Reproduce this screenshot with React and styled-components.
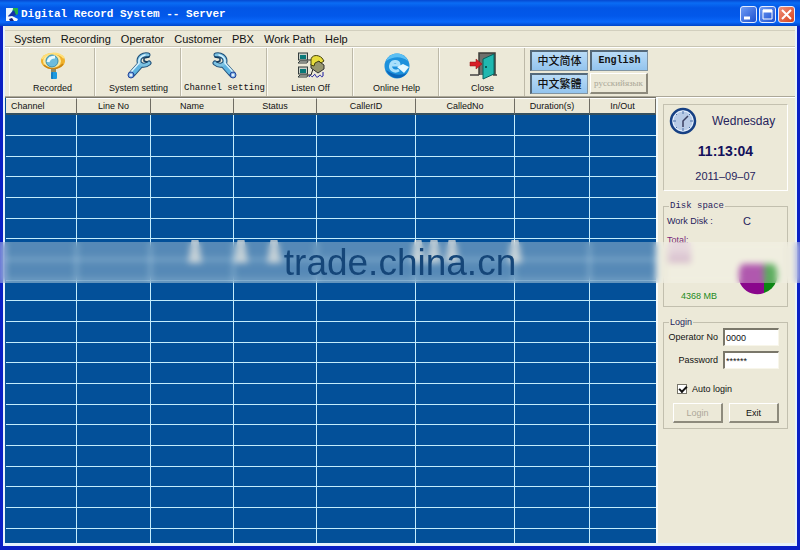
import React from "react";
import styled, { createGlobalStyle } from "styled-components";

const COLUMNS = [
  { name: "Channel", width: 71 },
  { name: "Line No", width: 74 },
  { name: "Name", width: 83 },
  { name: "Status", width: 83 },
  { name: "CallerID", width: 99 },
  { name: "CalledNo", width: 99 },
  { name: "Duration(s)", width: 75 },
  { name: "In/Out", width: 66 },
];

const MENUS = [
  "System",
  "Recording",
  "Operator",
  "Customer",
  "PBX",
  "Work Path",
  "Help",
];

const ROWS = Array.from({ length: 64 }, (_, i) => i);
const GLINTS = [195, 241, 274, 418, 434, 452, 515];

function AppIcon() {
  return (
    <svg width="14" height="15" viewBox="0 0 14 15">
      <path d="M1 1h8l-5 9H1z" fill="#e8f4ff" />
      <path d="M8 1h5v6l-6 3z" fill="#22b04a" />
      <path d="M3 9L9 3l2 5-7 3z" fill="#1430a8" />
      <path d="M1 10l6-1 6 3-1 2H1z" fill="#f4f8ff" />
      <path d="M4 12l3-1 2 3H5z" fill="#14207c" />
    </svg>
  );
}

function RecordedIcon() {
  return (
    <svg width="28" height="28" viewBox="0 0 28 28">
      <ellipse cx="14" cy="9" rx="12" ry="8" fill="#efb02a" />
      <ellipse cx="13" cy="9" rx="9" ry="7" fill="#fbe9a0" />
      <path d="M3 7C7 0 20 0 25 6" fill="none" stroke="#ffe07a" strokeWidth="2" />
      <path d="M5 13c5 5 14 5 19-1" fill="none" stroke="#c98412" strokeWidth="1.5" />
      <circle cx="13" cy="9" r="6" fill="#6cbcdc" stroke="#3b8fae" />
      <path d="M9 10c1-4 4-5 7-5" fill="none" stroke="#e9fbff" strokeWidth="3" />
      <rect x="12" y="17" width="5" height="3" fill="#9a8a5a" />
      <rect x="12" y="20" width="6" height="7" rx="1" fill="#1c9ae0" />
      <path d="M13 20v7" stroke="#0b62a8" />
    </svg>
  );
}

function WrenchIcon({ flip }) {
  return (
    <svg width="28" height="28" viewBox="0 0 28 28">
      <g
        fill="none"
        strokeLinecap="round"
        transform={flip ? "translate(28 0) scale(-1 1)" : undefined}
      >
        <path d="M7 22L15 13" stroke="#1f4f78" strokeWidth="7" />
        <path d="M23 3C18 2 14 5 14 9s5 6 10 2" stroke="#1f4f78" strokeWidth="5" />
        <path d="M7 22L15 13" stroke="#5fb4e0" strokeWidth="5" />
        <path d="M23 3C18 2 14 5 14 9s5 6 10 2" stroke="#7cc2e2" strokeWidth="3" />
        <path d="M6 20l8-9c-1-4 2-7 6-8" stroke="#d8f3ff" strokeWidth="1.5" />
        <path d="M24 5l-5 1v3l3 1" stroke="#123a5c" strokeWidth="1.500" />
        <circle cx="6" cy="23" r="3" fill="#6da8e0" stroke="#26449a" />
        <circle cx="6" cy="23" r="1.5" fill="#e8eef8" />
      </g>
    </svg>
  );
}

function ListenIcon() {
  return (
    <svg width="28" height="28" viewBox="0 0 28 28">
      {[1, 15].map((y) => (
        <g key={y}>
          <rect x="1.5" y={y} width="9" height="7" fill="#c8d0c8" stroke="#333c3c" />
          <rect x="3" y={y + 2} width="6" height="4" fill="#087878" />
          <path d={`M1 ${y + 10}l2-2h8l-1 2z`} fill="#e0e0d4" stroke="#333c3c" />
        </g>
      ))}
      <path d="M11 8h4l2 2M11 23h3l2-6" fill="none" stroke="#222" />
      <path d="M14 12l6-4 7 5v4l-6 4-7-5z" fill="#96966e" stroke="#333" />
      <path d="M14 8c0-5 7-6 11-2l2 3-3 2-2-2-4 2-1 3-3-1z" fill="#e7dc3c" stroke="#45420c" />
      <path d="M12 25c2-5 2 3 5-2 2-3 1 5 5 1 2-3 2 3 4 0v-4" fill="none" stroke="#1717a0" />
    </svg>
  );
}

function HelpIcon() {
  return (
    <svg width="28" height="28" viewBox="0 0 28 28">
      <circle cx="14" cy="14" r="12.5" fill="#1d91dc" />
      <path d="M3 9C7-1 21-1 25 9c-7-5-14-5-22 0z" fill="#5cc0f4" />
      <path d="M3 18c4 9 15 11 21 3-7 3-14 2-21-3z" fill="#0b65b8" />
      <path
        d="M8 13h8c0-4-6-5-8-1-2 5 3 9 8 6"
        fill="none"
        stroke="#a8e0fc"
        strokeWidth="3"
      />
      <path d="M14 15l6-3 6 3-5 6z" fill="#e4f8ff" />
    </svg>
  );
}

function DoorIcon() {
  return (
    <svg width="28" height="28" viewBox="0 0 28 28">
      <path d="M10 23V1h16v22" fill="#6f706c" stroke="#3c3c38" strokeWidth="1.5" />
      <path d="M1 23h9M24 23h4" stroke="#444" strokeWidth="1.5" />
      <path d="M14 7l11-5v20l-11 5z" fill="#20b8b0" stroke="#08625e" />
      <circle cx="17" cy="15" r="1" fill="#063c3a" />
      <path d="M1 10h6V7l6 5-6 5v-3H1z" fill="#d81e28" stroke="#8a1010" strokeWidth=".5" />
    </svg>
  );
}

function ClockIcon() {
  return (
    <svg width="28" height="28" viewBox="0 0 28 28">
      <circle cx="14" cy="14" r="12" fill="#b8cbe6" stroke="#164084" strokeWidth="2.5" />
      <circle cx="14" cy="14" r="10" fill="none" stroke="#e8f2ff" />
      <path
        d="M14 4v3M14 21v3M4 14h3M21 14h3M7 7l1 1M21 7l-1 1M7 21l1-1M21 21l-1-1"
        stroke="#4a70a8"
      />
      <path d="M14 20v-6l5-5" fill="none" stroke="#3a3f60" strokeWidth="1.5" />
    </svg>
  );
}

function DiskPie() {
  return (
    <svg width="38" height="38" viewBox="0 0 38 38">
      <path d="M3 0A19 19 0 0 0 25 29V0z" fill="#8a068c" />
      <path d="M25 0h10a19 19 0 0 1-10 29z" fill="#0c8614" />
    </svg>
  );
}

const TOOLS = [
  { label: "Recorded", icon: <RecordedIcon /> },
  { label: "System setting", icon: <WrenchIcon /> },
  { label: "Channel setting", icon: <WrenchIcon flip />, mono: true },
  { label: "Listen Off", icon: <ListenIcon /> },
  { label: "Online Help", icon: <HelpIcon /> },
  { label: "Close", icon: <DoorIcon /> },
];

function App() {
  return (
    <Window>
      <GlobalStyle />
      <TitleBar>
        <AppIcon />
        <Title>Digital Record System -- Server</Title>
        <CaptionButton aria-label="Minimize">
          <svg width="15" height="15" viewBox="0 0 15 15">
            <path d="M3 11h6" stroke="#fff" strokeWidth="3" />
          </svg>
        </CaptionButton>
        <CaptionButton aria-label="Maximize">
          <svg width="15" height="15" viewBox="0 0 15 15">
            <path d="M3 3h9v9H3z" fill="none" stroke="#fff" />
            <path d="M3 4h9" stroke="#fff" strokeWidth="3" />
          </svg>
        </CaptionButton>
        <CaptionButton $danger aria-label="Close window">
          <svg width="15" height="15" viewBox="0 0 15 15">
            <path d="M3 3l9 9M12 3l-9 9" stroke="#fff" strokeWidth="2" />
          </svg>
        </CaptionButton>
      </TitleBar>
      <Body>
        <MenuBar>
          {MENUS.map((menu) => (
            <MenuItem key={menu}>{menu}</MenuItem>
          ))}
        </MenuBar>
        <ToolBar>
          {TOOLS.map((tool) => (
            <ToolButton key={tool.label} $mono={tool.mono}>
              {tool.icon}
              {tool.label}
            </ToolButton>
          ))}
          <Languages>
            <LanguageButton>中文简体</LanguageButton>
            <LanguageButton $mono>English</LanguageButton>
            <LanguageButton>中文繁體</LanguageButton>
            <LanguageButton disabled>русскийязык</LanguageButton>
          </Languages>
        </ToolBar>
        <Main>
          <TableArea>
            <Table>
              <colgroup>
                {COLUMNS.map((col) => (
                  <Col key={col.name} $width={col.width} />
                ))}
              </colgroup>
              <thead>
                <tr>
                  {COLUMNS.map((col) => (
                    <HeadCell key={col.name}>{col.name}</HeadCell>
                  ))}
                </tr>
              </thead>
              <tbody>
                {ROWS.map((row) => (
                  <Row key={row}>
                    {COLUMNS.map((col) => (
                      <Cell key={col.name} />
                    ))}
                  </Row>
                ))}
              </tbody>
            </Table>
          </TableArea>
          <SideBar>
            <ClockPanel>
              <DayRow>
                <ClockIcon />
                <Day>Wednesday</Day>
              </DayRow>
              <Time>11:13:04</Time>
              <DateText>2011–09–07</DateText>
            </ClockPanel>
            <Group>
              <Legend $mono>Disk space</Legend>
              <DiskContent>
                <DiskRow>
                  <span>Work Disk :</span>
                  <Drive>C</Drive>
                </DiskRow>
                <Total>Total:</Total>
                <DiskUsage>
                  <FreeSpace>4368 MB</FreeSpace>
                  <DiskPie />
                </DiskUsage>
              </DiskContent>
            </Group>
            <Group>
              <Legend>Login</Legend>
              <LoginForm onSubmit={(e) => e.preventDefault()}>
                <Field>
                  Operator No
                  <TextInput defaultValue="0000" />
                </Field>
                <Field>
                  Password
                  <TextInput defaultValue="******" />
                </Field>
                <CheckField>
                  <CheckBox type="checkbox" defaultChecked />
                  Auto login
                </CheckField>
                <Buttons>
                  <PushButton disabled>Login</PushButton>
                  <PushButton type="button">Exit</PushButton>
                </Buttons>
              </LoginForm>
            </Group>
          </SideBar>
        </Main>
      </Body>
      {GLINTS.map((x) => (
        <Glint key={x} $x={x} />
      ))}
      <Smudge />
      <Banner>trade.china.cn</Banner>
    </Window>
  );
}

const GlobalStyle = createGlobalStyle`
  * {
    box-sizing: border-box;
  }
  body {
    margin: 0;
    overflow: hidden;
    font-family: "Liberation Sans", Arial, sans-serif;
    font-size: 9px;
    color: #111;
  }
  button, input {
    font: inherit;
    color: inherit;
  }
  svg {
    display: block;
    flex: none;
  }
`;

const monoFont = `"Liberation Mono", "Courier New", monospace`;

const Window = styled.div`
  position: relative;
  display: flex;
  flex-direction: column;
  height: 100vh;
  padding: 0 3px 4px;
  background: #0a1fc4;
`;

const TitleBar = styled.header`
  display: flex;
  align-items: center;
  gap: 2px;
  height: 26px;
  flex: none;
  margin: 0 -3px;
  padding: 2px 5px 0;
  background: linear-gradient(
    #0648d0 0,
    #0a6cf4 3px,
    #0256e6 8px,
    #0258ea 16px,
    #0a68fa 22px,
    #0044c8 26px
  );
`;

const Title = styled.h1`
  flex: 1;
  margin: 0;
  font-family: ${monoFont};
  font-size: 11px;
  font-weight: bold;
  color: #fff;
`;

const CaptionButton = styled.button`
  width: 17px;
  height: 17px;
  padding: 0;
  border: 1px solid #e4ecff;
  border-radius: 3px;
  background: ${(p) =>
    p.$danger
      ? "linear-gradient(135deg, #f0907a, #d8431c)"
      : "linear-gradient(135deg, #6f9cf4, #1c4fd0)"};
`;

const Body = styled.div`
  display: flex;
  flex: 1;
  flex-direction: column;
  min-height: 0;
  padding-top: 4px;
  border: solid #e6f2fc;
  border-width: 0 2px 3px;
  background: #ece9d8;
`;

const MenuBar = styled.nav`
  display: flex;
  flex: none;
  height: 17px;
  gap: 10px;
  padding-left: 9px;
  border-top: 1px solid #d2cfbe;
  border-bottom: 1px solid #c8c5b4;
`;

const MenuItem = styled.button`
  padding: 0;
  border: 0;
  background: none;
  font-size: 11px;
  line-height: 16px;
`;

const ToolBar = styled.div`
  display: flex;
  flex: none;
  height: 50px;
  padding-left: 4px;
  border-top: 1px solid #fff;
  border-bottom: 1px solid #aca899;
`;

const ToolButton = styled.button`
  display: flex;
  flex-direction: column;
  align-items: center;
  gap: 2px;
  width: 86px;
  padding: 4px 0 0 2px;
  border: 0;
  border-right: 1px solid #bdb9a8;
  box-shadow: inset 1px 0 #fbfaf2;
  background: none;
  line-height: 12px;
  white-space: nowrap;
  font-family: ${(p) => (p.$mono ? monoFont : "inherit")};
`;

const Languages = styled.div`
  display: grid;
  grid-template-columns: 58px 58px;
  grid-auto-rows: 21px;
  gap: 2px;
  padding: 2px 0 0 5px;
`;

const LanguageButton = styled.button`
  padding: 0 1px;
  border: solid;
  border-width: 2px 1px 1px 2px;
  border-color: #54697a #8295a2 #8295a2 #54697a;
  background: linear-gradient(#b9dbf6, #93c4ee);
  font-family: ${(p) =>
    p.$mono
      ? monoFont
      : `"Liberation Serif", "Noto Sans CJK SC", "Times New Roman", serif`};
  font-size: ${(p) => (p.$mono ? 10 : 11)}px;
  font-weight: ${(p) => (p.$mono ? "bold" : 500)};
  line-height: 16px;
  white-space: nowrap;

  &:disabled {
    padding: 0;
    border-width: 1px 2px 2px 1px;
    border-color: #fff #8d8a7c #8d8a7c #fff;
    background: #ece9d8;
    color: #aaa797;
    font-size: 9px;
    font-weight: normal;
  }
`;

const Main = styled.main`
  display: flex;
  flex: 1;
  min-height: 0;
`;

const TableArea = styled.div`
  flex: 1;
  overflow: hidden;
  padding-left: 1px;
  border-top: 1px solid #77756a;
  background: #035099;
`;

const Table = styled.table`
  width: 100%;
  table-layout: fixed;
  border-spacing: 0;
`;

const Col = styled.col`
  width: ${(p) => p.$width}px;
`;

const HeadCell = styled.th`
  height: 17px;
  padding: 0 5px;
  border: solid;
  border-width: 1px 1px 2px 0;
  border-color: #fff #6e6c62 #35505f #fff;
  background: #ece9d8;
  font-weight: normal;
  line-height: 12px;

  &:first-child {
    text-align: left;
  }
`;

/* the grid pitch is two 21px rows for each 20px one */
const Row = styled.tr`
  height: 21px;

  &:nth-child(3n) {
    height: 20px;
  }
`;

const Cell = styled.td`
  padding: 0;
  border: solid #c3ecfc;
  border-width: 0 1px 1px 0;

  &:last-child {
    border-right: 0;
  }
`;

const SideBar = styled.aside`
  display: flex;
  flex: none;
  flex-direction: column;
  gap: 10px;
  width: 139px;
  padding: 6px 7px 0 5px;
  border-left: 2px solid #f6fbfa;
  border-top: 1px solid #fff;
  color: #26235c;
`;

const ClockPanel = styled.section`
  display: flex;
  flex-direction: column;
  align-items: center;
  height: 87px;
  padding-top: 2px;
  border: 1px solid;
  border-color: #c4c1b0 #fff #fff #c4c1b0;
`;

const DayRow = styled.div`
  display: flex;
  align-self: stretch;
  align-items: center;
  gap: 15px;
  padding-left: 5px;
`;

const Day = styled.span`
  font-size: 12px;
`;

const Time = styled.strong`
  margin-top: 7px;
  font-size: 14px;
  line-height: 18px;
  color: #14115c;
`;

const DateText = styled.span`
  margin-top: 9px;
  font-size: 11px;
  line-height: 14px;
`;

const Group = styled.fieldset`
  min-width: 0;
  margin: 0;
  padding: 0;
  border: 1px solid #c2bfae;
`;

const Legend = styled.legend`
  margin-left: 5px;
  padding: 0 1px;
  line-height: 11px;
  font-family: ${(p) => (p.$mono ? monoFont : "inherit")};
`;

const DiskContent = styled.div`
  display: flex;
  flex-direction: column;
  height: 94px;
  padding: 0 10px 4px 3px;
`;

const DiskRow = styled.div`
  display: flex;
  justify-content: space-between;
  line-height: 19px;
`;

const Drive = styled.span`
  padding-right: 26px;
  font-size: 11px;
`;

const Total = styled.div`
  line-height: 19px;
  color: #7a2a7a;
`;

const DiskUsage = styled.div`
  display: flex;
  align-items: flex-end;
  justify-content: space-between;
  margin-top: auto;
  padding-left: 14px;
`;

const FreeSpace = styled.span`
  line-height: 12px;
  color: #1c8a1c;
`;

const LoginForm = styled.form`
  display: flex;
  flex-direction: column;
  gap: 5px;
  height: 100px;
  padding: 0 8px 0 4px;
  color: #111;
`;

const Field = styled.label`
  display: flex;
  align-items: center;
  justify-content: flex-end;
  gap: 5px;
  height: 18px;
  white-space: nowrap;
`;

const TextInput = styled.input`
  width: 56px;
  height: 18px;
  padding: 0 1px;
  border: solid;
  border-width: 2px 1px 1px 2px;
  border-color: #7a776a #f8f6ea #f8f6ea #7a776a;
  background: #fff;
`;

const CheckField = styled.label`
  display: flex;
  align-items: center;
  gap: 5px;
  height: 19px;
  margin-top: 5px;
  padding-left: 9px;
`;

const CheckBox = styled.input`
  appearance: none;
  width: 10px;
  height: 10px;
  margin: 0;
  border: 1px solid #77756a;
  background: #fff;

  &:checked::before {
    content: "";
    display: block;
    width: 6px;
    height: 3px;
    margin: 1px;
    border: solid #111;
    border-width: 0 0 2px 2px;
    transform: rotate(-45deg);
  }
`;

const Buttons = styled.div`
  display: flex;
  gap: 6px;
  padding-left: 5px;
`;

const PushButton = styled.button`
  flex: 1;
  height: 20px;
  padding: 0;
  border: solid;
  border-width: 1px 2px 2px 1px;
  border-color: #fff #8d8a7c #8d8a7c #fff;
  background: #ece9d8;

  &:disabled {
    color: #aca899;
  }
`;

const Banner = styled.div`
  position: absolute;
  top: 242px;
  left: 0;
  right: 0;
  height: 41px;
  background: rgba(250, 250, 240, 0.34);
  backdrop-filter: blur(3px);
  font-size: 37px;
  line-height: 42px;
  text-align: center;
  color: #154679;
`;

const Glint = styled.div`
  position: absolute;
  top: 240px;
  left: ${(p) => p.$x - 7}px;
  width: 14px;
  height: 23px;
  clip-path: polygon(25% 0, 75% 0, 100% 100%, 0 100%);
  background: rgba(235, 230, 220, 0.7);
`;

const Smudge = styled.div`
  position: absolute;
  top: 243px;
  right: 109px;
  width: 23px;
  height: 20px;
  background: linear-gradient(#e6d6de, #c49cb8);
`;

export default App;
